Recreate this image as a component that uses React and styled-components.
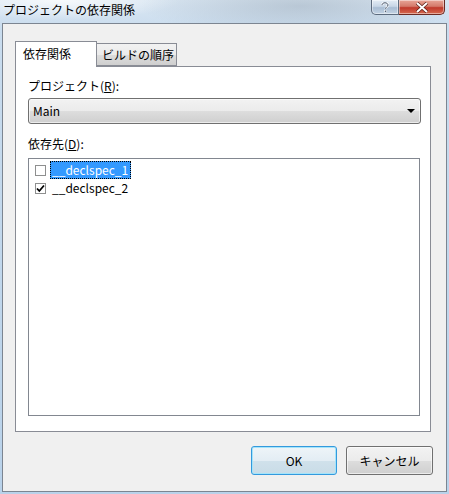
import React, { useState } from "react";
import styled, { createGlobalStyle } from "styled-components";

const GlobalStyle = createGlobalStyle`
  html, body {
    margin: 0;
    padding: 0;
    width: 449px;
    height: 494px;
    overflow: hidden;
  }
  body {
    font-family: "Noto Sans CJK JP", "Noto Sans", sans-serif;
    font-size: 12px;
    color: #000;
  }
`;

const Frame = styled.div`
  width: 449px;
  height: 494px;
  box-sizing: border-box;
  display: flex;
  flex-direction: column;
  padding: 0 2px 2px 2px;
  background:
    radial-gradient(ellipse 160px 30px at 300px 6px, rgba(150, 165, 180, 0.45), transparent),
    radial-gradient(ellipse 120px 20px at 60px 0px, rgba(255, 255, 255, 0.8), transparent),
    linear-gradient(180deg, #d9e6f2 0%, #c9dcee 30px, #b9d2ea 100%);
`;

const TitleBar = styled.div`
  height: 23px;
  display: flex;
  justify-content: space-between;
  align-items: flex-start;
  padding-right: 2px;
`;

const Title = styled.div`
  padding: 2px 0 0 1px;
  font-size: 12px;
  line-height: 16px;
  color: #000;
`;

const Caption = styled.div`
  display: flex;
`;

const CaptionButton = styled.div`
  height: 15px;
  width: ${(p) => p.$w}px;
  box-sizing: border-box;
  display: flex;
  align-items: center;
  justify-content: center;
  border: 1px solid ${(p) => (p.$close ? "#6d2a22" : "#5d6b7e")};
  border-top: none;
  border-left: ${(p) => (p.$close ? "none" : undefined)};
  border-radius: ${(p) => (p.$close ? "0 0 5px 0" : "0 0 0 5px")};
  background: ${(p) =>
    p.$close
      ? "linear-gradient(180deg, #e8a597 0%, #d47a6a 45%, #c0392b 55%, #d66a50 100%)"
      : "linear-gradient(180deg, #e4ecf5 0%, #c8d6e6 45%, #a9bdd3 55%, #c3d3e4 100%)"};
  box-shadow: inset 0 0 0 1px rgba(255, 255, 255, 0.45);
`;

const Client = styled.div`
  flex: 1;
  display: flex;
  flex-direction: column;
  border: 1px solid #7c8591;
  background: #f0f0f0;
  padding: 17px 13px 0 12px;
`;

const Tabs = styled.div`
  display: flex;
  align-items: flex-end;
  margin-bottom: -1px;
  position: relative;
  z-index: 1;
`;

const Tab = styled.div`
  box-sizing: border-box;
  height: ${(p) => (p.$active ? 26 : 23)}px;
  width: ${(p) => (p.$active ? 82 : 80)}px;
  border: 1px solid #898c95;
  border-bottom: ${(p) => (p.$active ? "none" : "1px solid #898c95")};
  border-left: ${(p) => (p.$active ? "1px solid #898c95" : "none")};
  background: ${(p) =>
    p.$active ? "#fff" : "linear-gradient(180deg, #f2f2f2 0%, #ebebeb 50%, #dddddd 51%, #cfcfcf 100%)"};
  padding: ${(p) => (p.$active ? "4px 0 0 7px" : "3px 0 0 5px")};
  line-height: 16px;
  white-space: nowrap;
  margin-bottom: ${(p) => (p.$active ? 0 : 1)}px;
`;

const Panel = styled.div`
  box-sizing: border-box;
  width: 416px;
  height: 366px;
  border: 1px solid #898c95;
  background: #fff;
  padding: 11px 9px 0 12px;
  display: flex;
  flex-direction: column;
`;

const Label = styled.div`
  line-height: 16px;
  height: 16px;
  u {
    text-decoration: underline;
  }
`;

const Combo = styled.div`
  box-sizing: border-box;
  margin-top: 4px;
  height: 26px;
  border: 1px solid #707070;
  border-radius: 3px;
  background: linear-gradient(180deg, #f2f2f2 0%, #ebebeb 50%, #dddddd 51%, #cfcfcf 100%);
  box-shadow: inset 0 0 0 1px rgba(255, 255, 255, 0.6);
  display: flex;
  align-items: center;
  justify-content: space-between;
  padding: 0 5px 0 4px;
  line-height: 16px;
`;

const Arrow = styled.span`
  width: 0;
  height: 0;
  border-left: 4px solid transparent;
  border-right: 4px solid transparent;
  border-top: 4px solid #000;
`;

const SecondLabel = styled(Label)`
  margin-top: 12px;
`;

const List = styled.div`
  box-sizing: border-box;
  margin-top: 6px;
  width: 392px;
  height: 258px;
  border: 1px solid #828790;
  background: #fff;
  padding: 2px 0 0 6px;
`;

const Row = styled.div`
  display: flex;
  align-items: center;
  height: 18px;
`;

const Box = styled.span`
  box-sizing: border-box;
  width: 11px;
  height: 11px;
  border: 1px solid #8e8f8f;
  background: #fff;
  display: flex;
  align-items: center;
  justify-content: center;
  margin-right: 4px;
  flex-shrink: 0;
`;

const ItemText = styled.span`
  line-height: 16px;
  padding: 0 2px 0 1px;
  border: 1px dotted ${(p) => (p.$selected ? "#000" : "transparent")};
  background: ${(p) => (p.$selected ? "#3399ff" : "transparent")};
  color: ${(p) => (p.$selected ? "#fff" : "#000")};
`;

const Footer = styled.div`
  display: flex;
  justify-content: flex-end;
  gap: 9px;
  margin-top: 14px;
`;

const Button = styled.button`
  box-sizing: border-box;
  width: ${(p) => p.$w}px;
  height: 29px;
  border-radius: 3px;
  font-family: inherit;
  font-size: 12px;
  color: #000;
  padding: 0;
  border: 1px solid ${(p) => (p.$default ? "#3399dd" : "#707070")};
  background: ${(p) =>
    p.$default
      ? "linear-gradient(180deg, #eef4f8 0%, #e3edf4 50%, #d0e1eb 51%, #c9dce7 100%)"
      : "linear-gradient(180deg, #f2f2f2 0%, #ebebeb 50%, #dddddd 51%, #cfcfcf 100%)"};
  box-shadow: inset 0 0 0 1px ${(p) => (p.$default ? "#a4e4fa" : "rgba(255,255,255,0.6)")};
`;

const items = [
  { name: "__declspec_1", checked: false },
  { name: "__declspec_2", checked: true },
];

export default function App() {
  const [deps, setDeps] = useState(items);
  const [selected, setSelected] = useState(0);

  const toggle = (i) =>
    setDeps((prev) => prev.map((d, idx) => (idx === i ? { ...d, checked: !d.checked } : d)));

  return (
    <>
      <GlobalStyle />
      <Frame>
        <TitleBar>
          <Title>プロジェクトの依存関係</Title>
          <Caption>
            <CaptionButton $w={28}>
              <svg width="10" height="11" viewBox="0 0 10 11">
                <path
                  d="M2 3.2C2 1.6 3.3 0.8 5 0.8S8 1.7 8 3.1C8 4.6 5.6 5 5.6 6.8"
                  fill="none"
                  stroke="#fff"
                  strokeWidth="2.2"
                />
                <path
                  d="M2 3.2C2 1.6 3.3 0.8 5 0.8S8 1.7 8 3.1C8 4.6 5.6 5 5.6 6.8"
                  fill="none"
                  stroke="#3f4f66"
                  strokeWidth="1"
                />
                <rect x="4.6" y="8.2" width="2" height="2" fill="#3f4f66" stroke="#fff" strokeWidth="0.6" />
              </svg>
            </CaptionButton>
            <CaptionButton $w={46} $close>
              <svg width="14" height="11" viewBox="0 0 14 11">
                <path d="M2 1L12 10M12 1L2 10" stroke="#5a1e16" strokeWidth="3.4" />
                <path d="M2 1L12 10M12 1L2 10" stroke="#fff" strokeWidth="2" />
              </svg>
            </CaptionButton>
          </Caption>
        </TitleBar>
        <Client>
          <Tabs>
            <Tab $active>依存関係</Tab>
            <Tab>ビルドの順序</Tab>
          </Tabs>
          <Panel>
            <Label>
              プロジェクト(<u>R</u>):
            </Label>
            <Combo>
              <span>Main</span>
              <Arrow />
            </Combo>
            <SecondLabel>
              依存先(<u>D</u>):
            </SecondLabel>
            <List>
              {deps.map((d, i) => (
                <Row key={d.name} onClick={() => setSelected(i)}>
                  <Box onClick={() => toggle(i)}>
                    {d.checked && (
                      <svg width="9" height="9" viewBox="0 0 9 9">
                        <path d="M1 4.5L3.3 7L8 1.5" fill="none" stroke="#000" strokeWidth="1.8" />
                      </svg>
                    )}
                  </Box>
                  <ItemText $selected={selected === i}>{d.name}</ItemText>
                </Row>
              ))}
            </List>
          </Panel>
          <Footer>
            <Button $w={86} $default>
              OK
            </Button>
            <Button $w={87}>キャンセル</Button>
          </Footer>
        </Client>
      </Frame>
    </>
  );
}
